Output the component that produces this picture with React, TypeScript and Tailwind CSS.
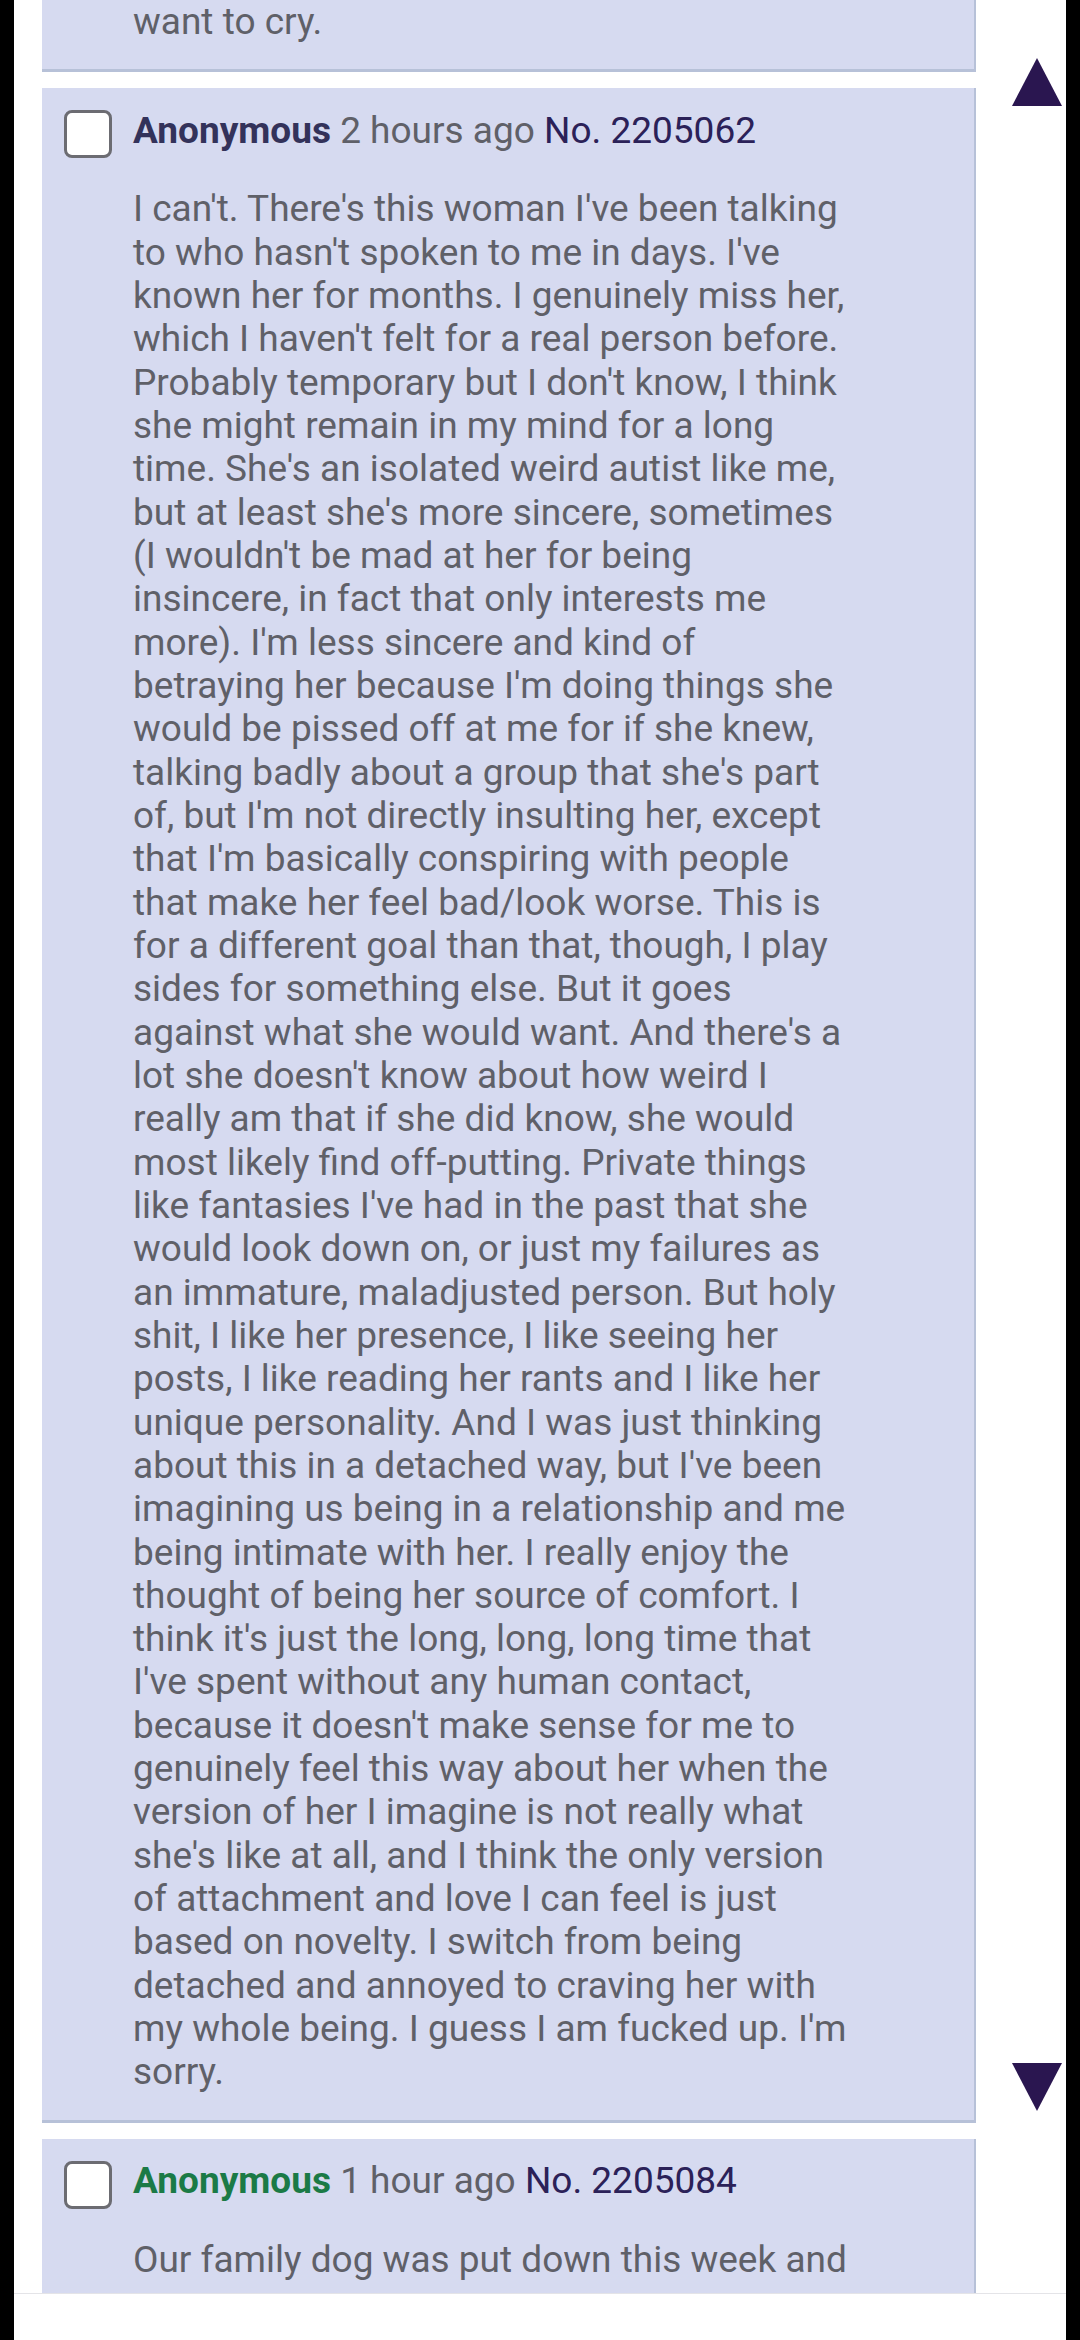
import React from 'react';

const postLines = [
  "I can't. There's this woman I've been talking",
  "to who hasn't spoken to me in days. I've",
  'known her for months. I genuinely miss her,',
  "which I haven't felt for a real person before.",
  "Probably temporary but I don't know, I think",
  'she might remain in my mind for a long',
  "time. She's an isolated weird autist like me,",
  "but at least she's more sincere, sometimes",
  "(I wouldn't be mad at her for being",
  'insincere, in fact that only interests me',
  "more). I'm less sincere and kind of",
  "betraying her because I'm doing things she",
  'would be pissed off at me for if she knew,',
  "talking badly about a group that she's part",
  "of, but I'm not directly insulting her, except",
  "that I'm basically conspiring with people",
  'that make her feel bad/look worse. This is',
  'for a different goal than that, though, I play',
  'sides for something else. But it goes',
  "against what she would want. And there's a",
  "lot she doesn't know about how weird I",
  'really am that if she did know, she would',
  'most likely find off-putting. Private things',
  "like fantasies I've had in the past that she",
  'would look down on, or just my failures as',
  'an immature, maladjusted person. But holy',
  'shit, I like her presence, I like seeing her',
  'posts, I like reading her rants and I like her',
  'unique personality. And I was just thinking',
  "about this in a detached way, but I've been",
  'imagining us being in a relationship and me',
  'being intimate with her. I really enjoy the',
  'thought of being her source of comfort. I',
  "think it's just the long, long, long time that",
  "I've spent without any human contact,",
  "because it doesn't make sense for me to",
  'genuinely feel this way about her when the',
  'version of her I imagine is not really what',
  "she's like at all, and I think the only version",
  'of attachment and love I can feel is just',
  'based on novelty. I switch from being',
  'detached and annoyed to craving her with',
  "my whole being. I guess I am fucked up. I'm",
  'sorry.',
];

function Checkbox() {
  return <div className="w-[48px] h-[48px] shrink-0 rounded-[8px] border-[3px] border-[#6c6c72] bg-white" />;
}

function PostHeader({ nameColor, time, no }: { nameColor: string; time: string; no: string }) {
  return (
    <div className="flex items-center gap-[21px] pl-[22px]">
      <Checkbox />
      <div className="whitespace-nowrap leading-[43px] -mt-[8px]">
        <span className={`font-bold ${nameColor}`}>Anonymous</span>
        <span className="text-[#5f6068]"> {time} </span>
        <span className="text-[#2b2158]">No. {no}</span>
      </div>
    </div>
  );
}

function Lines({ lines }: { lines: string[] }) {
  return (
    <div className="pl-[91px] text-[#5f6068]">
      {lines.map((l, i) => (
        <div key={i} className="whitespace-nowrap h-[43.33px] leading-[43.33px]">
          {l}
        </div>
      ))}
    </div>
  );
}

function Triangle({ down }: { down?: boolean }) {
  return (
    <svg width="50" height="50" viewBox="0 0 50 50">
      <polygon points={down ? '0,0 50,0 25,48' : '0,50 25,2 50,50'} fill="#2a1650" />
    </svg>
  );
}

export default function App() {
  return (
    <div className="w-[1080px] h-[2340px] flex bg-black overflow-hidden font-['Roboto',sans-serif] text-[37px]">
      <div className="w-[14px] shrink-0 bg-black" />
      <div className="flex-1 flex flex-col bg-white">
        <div className="h-[2293px] flex overflow-hidden">
          <div className="w-[962px] shrink-0 pl-[28px] flex flex-col gap-[16px]">
            <div className="bg-[#d6daf0] border-b-[3px] border-r-[2px] border-[#b7c1d8] pb-[26px]">
              <Lines lines={['want to cry.']} />
            </div>
            <div className="bg-[#d6daf0] border-b-[3px] border-r-[2px] border-[#b7c1d8] pt-[22px] pb-[26px]">
              <PostHeader nameColor="text-[#33325a]" time="2 hours ago" no="2205062" />
              <div className="mt-[29px]">
                <Lines lines={postLines} />
              </div>
            </div>
            <div className="bg-[#d6daf0] border-r-[2px] border-[#b7c1d8] pt-[22px] pb-[26px]">
              <PostHeader nameColor="text-[#1b7a46]" time="1 hour ago" no="2205084" />
              <div className="mt-[29px]">
                <Lines lines={['Our family dog was put down this week and']} />
              </div>
            </div>
          </div>
          <div className="flex-1 flex flex-col justify-between pl-[36px] pt-[56px] pb-[180px]">
            <Triangle />
            <Triangle down />
          </div>
        </div>
        <div className="flex-1 bg-white border-t border-[#e4e4e8]" />
      </div>
      <div className="w-[14px] shrink-0 bg-black" />
    </div>
  );
}
